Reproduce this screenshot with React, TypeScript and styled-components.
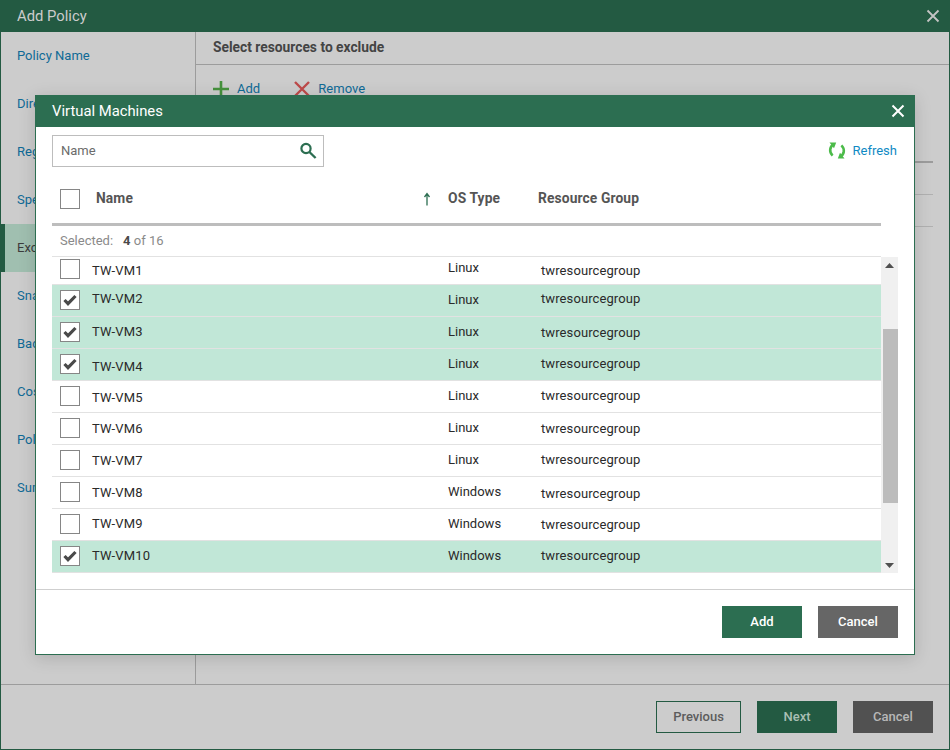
import React from "react";
import styled, { createGlobalStyle } from "styled-components";

const Global = createGlobalStyle`
  html, body { margin: 0; padding: 0; background: #ccc; }
  * { box-sizing: border-box; }
  body { font-family: Roboto, "Liberation Sans", Arial, sans-serif; font-size: 13px; }
`;

const Frame = styled.div`
  position: relative; width: 950px; height: 750px; display: flex; flex-direction: column;
  background: #cccccc; border: 1px solid #235a42; border-top: 0; overflow: hidden;
`;
const TitleBar = styled.div<{ $modal?: boolean }>`
  flex: none; height: 32px; display: flex; align-items: center; justify-content: space-between;
  background: ${p => (p.$modal ? "#2c6e51" : "#235a42")};
  color: ${p => (p.$modal ? "#fff" : "#ccc")};
  font-size: 14.8px; padding: 0 8px 0 16px;
`;
const CloseIcon = styled.svg<{ $s: number }>`width: ${p => p.$s}px; height: ${p => p.$s}px; display: block;`;
const Body = styled.div`flex: 1; display: flex; min-height: 0;`;
const Side = styled.nav`width: 195px; flex: none; border-right: 1px solid #9c9c9c;`;
const SideItem = styled.div<{ $active?: boolean }>`
  height: 48px; display: flex; align-items: center; padding: 0 0 2px 16px;
  color: ${p => (p.$active ? "#3c3c3c" : "#0f6a96")};
  ${p => (p.$active ? "background:#a0bfb0; border-left:5px solid #235a42; margin-left:-1px; padding-left:12px;" : "")}
`;
const Main = styled.div`flex: 1; display: flex; flex-direction: column; min-width: 0;`;
const MainHead = styled.div`
  height: 33px; flex: none; border-bottom: 1px solid #9c9c9c; padding: 7px 0 0 17px;
  font-weight: 700; font-size: 13.8px; color: #444; line-height: 16px;
`;
const Toolbar = styled.div`height: 47px; flex: none; display: flex; align-items: center; gap: 34px; padding: 0 0 0 17px;`;
const ToolBtn = styled.div`display: flex; align-items: center; gap: 8px; color: #0f6a96; line-height: 16px; letter-spacing: .03px;`;
const BackTable = styled.div`flex: 1; margin: 0 16px 0 17px;`;
const BackRow = styled.div<{ $h: number; $w: number; $c: string }>`
  height: ${p => p.$h}px; border-bottom: ${p => p.$w}px solid ${p => p.$c};
`;
const Footer = styled.div`
  height: 65px; flex: none; border-top: 1px solid #9c9c9c; display: flex; justify-content: flex-end;
  align-items: flex-start; gap: 16px; padding: 16px 16px 0 0;
`;
const Btn = styled.button<{ $kind: "green" | "gray" | "outline" | "dimGreen" | "dimGray" }>`
  width: ${p => (p.$kind === "outline" ? "85px" : "80px")}; height: 32px; border: 0; padding: 0 0 2px;
  font: 500 13px Roboto, "Liberation Sans", sans-serif;
  ${p => p.$kind === "green" && "background:#2c6e51;color:#fff;"}
  ${p => p.$kind === "gray" && "background:#666;color:#fff;"}
  ${p => p.$kind === "dimGreen" && "background:#235a42;color:#a9bfb4;"}
  ${p => p.$kind === "dimGray" && "background:#515151;color:#b8b8b8;"}
  ${p => p.$kind === "outline" && "background:transparent;color:#5c5c5c;border:1px solid #235a42;"}
`;
const Modal = styled.div`
  position: absolute; left: 34px; top: 95px; width: 880px; height: 560px; background: #fff;
  border: 1px solid #2c6e51; border-top: 0; display: flex; flex-direction: column;
  box-shadow: 0 3px 16px rgba(0,0,0,.15);
`;
const ModalBody = styled.div`flex: 1; display: flex; flex-direction: column; padding: 8px 16px 0 16px;`;
const SearchRow = styled.div`display: flex; justify-content: space-between; align-items: center; height: 32px; flex: none;`;
const SearchBox = styled.div`
  width: 272px; height: 32px; border: 1px solid #bdbdbd; display: flex; align-items: center;
  justify-content: space-between; padding: 0 6px 2px 8px; color: #6b6b6b;
`;
const Refresh = styled.div`display: flex; align-items: center; gap: 7px; color: #0f8ac4; padding: 0 1px 2px 0;`;
const TableHead = styled.div`
  width: 829px; height: 59px; flex: none; border-bottom: 3px solid #bdbdbd; display: grid;
  grid-template-columns: 36px 326px 26px 90px 1fr; align-items: center;
  padding: 8px 0 0 8px; font-size: 13.8px; color: #555;
`;
const Box = styled.div<{ $top?: number }>`
  width: 20px; height: 20px; border: 1px solid #868686; background: #fff; display: flex;
  align-items: center; justify-content: center; margin-top: ${p => p.$top ?? 0}px;
`;
const HeadLabel = styled.span`padding-bottom: 2px; font-weight: 700; letter-spacing: .12px;`;
const Selected = styled.div`
  width: 829px; height: 31px; flex: none; border-bottom: 1px solid #e2e2e2; padding: 7px 0 0 8px;
  font-size: 13px; line-height: 16px; color: #8a8a8a;
  b { color: #4a4a4a; margin-left: 10px; font-weight: 700; }
`;
const ListArea = styled.div`flex: none; display: flex; height: 316px;`;
const List = styled.div`width: 829px; flex: none;`;
const Row = styled.div<{ $on: boolean; $first?: boolean }>`
  height: ${p => (p.$first ? 28 : 32)}px; display: grid; grid-template-columns: 32px 356px 93px 1fr;
  padding-left: 8px; align-items: start; border-bottom: 1px solid #e2e2e2; color: #2a2a2a;
  background: ${p => (p.$on ? "#c1e7d7" : "#fff")}; font-size: 13px; line-height: 16px;
`;
const Cell = styled.div<{ $top: number }>`padding-top: ${p => p.$top}px; white-space: nowrap;`;
const NameCell = styled(Cell)`letter-spacing: .2px;`;
const GroupCell = styled(Cell)`letter-spacing: .1px;`;
const Scroll = styled.div`
  width: 17px; flex: none; background: #f0f0f0; display: flex; flex-direction: column;
  justify-content: space-between; align-items: center;
`;
const ScrollBtn = styled.div`height: 16px; flex: none; display: flex; align-items: center; justify-content: center;`;
const Track = styled.div`flex: 1; display: flex; flex-direction: column; padding: 56px 0 0 2px; width: 100%;`;
const Thumb = styled.div`height: 174px; background: #bcbcbc; width: 100%; flex: none;`;
const ModalFoot = styled.div`
  height: 65px; flex: none; margin: 16px -16px 0; border-top: 1px solid #cfcfcf; display: flex;
  justify-content: flex-end; gap: 16px; padding: 16px 16px 0 0;
`;

const X = ({ c, s = 16, w = 1.8 }: { c: string; s?: number; w?: number }) => (
  <CloseIcon $s={s} viewBox="0 0 16 16">
    <path d="M2.5 2.5 13.5 13.5M13.5 2.5 2.5 13.5" stroke={c} strokeWidth={w} fill="none" />
  </CloseIcon>
);
const Check = () => (
  <svg width="14" height="12" viewBox="0 0 14 12"><path d="M1.5 6 5 9.6 12.5 2" stroke="#4a4a4a" strokeWidth="3.2" fill="none" /></svg>
);

const sideItems = ["Policy Name", "Directories", "Regions", "Specify", "Exclusions", "Snapshots", "Backup", "Cost", "Policy", "Summary"];

const rows = [
  { n: "TW-VM1", os: "Linux", on: false, b: 2, nt: 6, ot: 3, gt: 6 },
  { n: "TW-VM2", os: "Linux", on: true, b: 5, nt: 6, ot: 7, gt: 6 },
  { n: "TW-VM3", os: "Linux", on: true, b: 5, nt: 7, ot: 7, gt: 8 },
  { n: "TW-VM4", os: "Linux", on: true, b: 5, nt: 10, ot: 7, gt: 7 },
  { n: "TW-VM5", os: "Linux", on: false, b: 5, nt: 9, ot: 7, gt: 7 },
  { n: "TW-VM6", os: "Linux", on: false, b: 5, nt: 8, ot: 7, gt: 8 },
  { n: "TW-VM7", os: "Linux", on: false, b: 5, nt: 8, ot: 7, gt: 7 },
  { n: "TW-VM8", os: "Windows", on: false, b: 5, nt: 8, ot: 7, gt: 9 },
  { n: "TW-VM9", os: "Windows", on: false, b: 5, nt: 7, ot: 7, gt: 8 },
  { n: "TW-VM10", os: "Windows", on: true, b: 5, nt: 7, ot: 7, gt: 7 },
];

export default function App() {
  return (
    <Frame>
      <Global />
      <TitleBar>
        <span>Add Policy</span>
        <X c="#c4c4c4" />
      </TitleBar>
      <Body>
        <Side>
          {sideItems.map((s, i) => <SideItem key={s} $active={i === 4}>{s}</SideItem>)}
        </Side>
        <Main>
          <MainHead>Select resources to exclude</MainHead>
          <Toolbar>
            <ToolBtn>
              <svg width="16" height="16" viewBox="0 0 16 16"><path d="M8 0v16M0 8h16" stroke="#46913d" strokeWidth="2.6" /></svg>
              Add
            </ToolBtn>
            <ToolBtn>
              <svg width="16" height="16" viewBox="0 0 16 16"><path d="M1 1 15 15M15 1 1 15" stroke="#bd4a4a" strokeWidth="2.4" /></svg>
              Remove
            </ToolBtn>
          </Toolbar>
          <BackTable>
            <BackRow $h={51} $w={2} $c="#9c9c9c" />
            <BackRow $h={32} $w={1} $c="#b0b0b0" />
            <BackRow $h={32} $w={1} $c="#b0b0b0" />
          </BackTable>
        </Main>
      </Body>
      <Footer>
        <Btn $kind="outline">Previous</Btn>
        <Btn $kind="dimGreen">Next</Btn>
        <Btn $kind="dimGray">Cancel</Btn>
      </Footer>
      <Modal>
        <TitleBar $modal>
          <span>Virtual Machines</span>
          <X c="#fff" s={16} w={2} />
        </TitleBar>
        <ModalBody>
          <SearchRow>
            <SearchBox>
              Name
              <svg width="18" height="18" viewBox="0 0 18 18"><circle cx="7" cy="7.5" r="4.6" stroke="#2c6e51" strokeWidth="2.2" fill="none" /><path d="M10.4 11 16.6 17" stroke="#2c6e51" strokeWidth="2.4" /></svg>
            </SearchBox>
            <Refresh>
              <svg width="18" height="17" viewBox="0 0 18 17" fill="none">
                <path d="M6.2 2.6C1.6 4 0.8 10 4.6 13.6" stroke="#4cbb4a" strokeWidth="2.6" />
                <path d="M1.5 0.5H8.2L6 6.2Z" fill="#4cbb4a" />
                <path d="M11.8 14.4C16.4 13 17.2 7 13.4 3.4" stroke="#4cbb4a" strokeWidth="2.6" />
                <path d="M16.5 16.5H9.8L12 10.8Z" fill="#4cbb4a" />
              </svg>
              Refresh
            </Refresh>
          </SearchRow>
          <TableHead>
            <Box />
            <HeadLabel>Name</HeadLabel>
            <svg width="10" height="14" viewBox="0 0 10 14"><path d="M5 13.5V2M2.5 5 5 1.5 7.5 5" stroke="#2c6e51" strokeWidth="1.3" fill="none" /></svg>
            <HeadLabel>OS Type</HeadLabel>
            <HeadLabel>Resource Group</HeadLabel>
          </TableHead>
          <Selected>Selected:<b>4</b> of 16</Selected>
          <ListArea>
            <List>
              {rows.map((r, i) => (
                <Row key={r.n} $on={r.on} $first={i === 0}>
                  <Box $top={r.b}>{r.on && <Check />}</Box>
                  <NameCell $top={r.nt}>{r.n}</NameCell>
                  <Cell $top={r.ot}>{r.os}</Cell>
                  <GroupCell $top={r.gt}>twresourcegroup</GroupCell>
                </Row>
              ))}
            </List>
            <Scroll>
              <ScrollBtn><svg width="9" height="5" viewBox="0 0 9 5"><path d="M0 5 4.5 0 9 5Z" fill="#505050" /></svg></ScrollBtn>
              <Track><Thumb /></Track>
              <ScrollBtn><svg width="9" height="5" viewBox="0 0 9 5"><path d="M0 0 4.5 5 9 0Z" fill="#505050" /></svg></ScrollBtn>
            </Scroll>
          </ListArea>
          <ModalFoot>
            <Btn $kind="green">Add</Btn>
            <Btn $kind="gray">Cancel</Btn>
          </ModalFoot>
        </ModalBody>
      </Modal>
    </Frame>
  );
}
